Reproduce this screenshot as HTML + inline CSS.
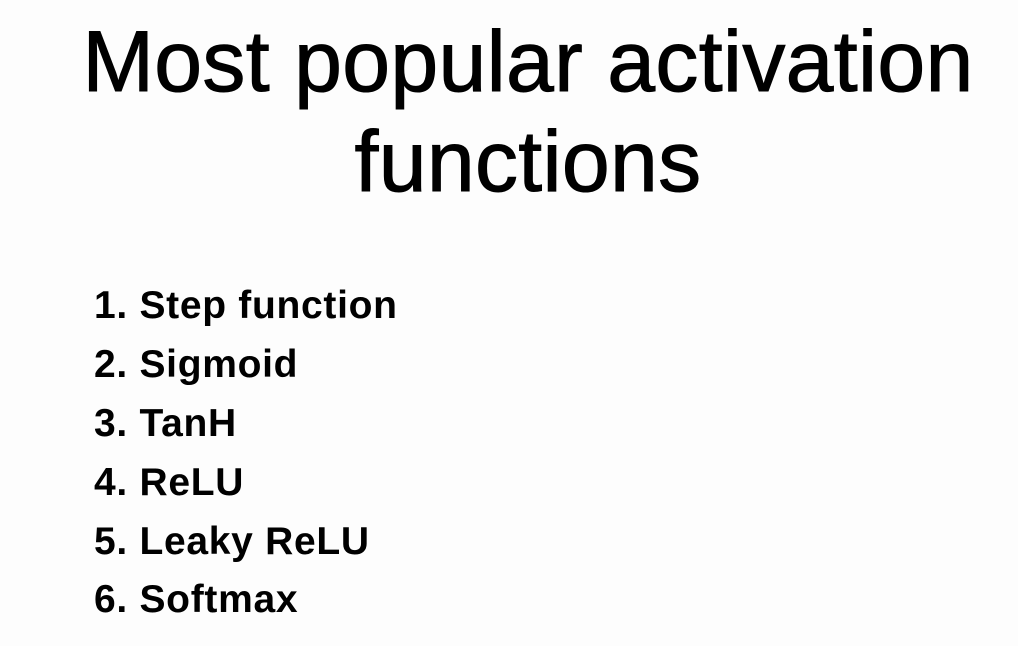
<!DOCTYPE html>
<html><head><style>
html,body{margin:0;padding:0;width:1018px;height:646px;background:#fdfdfd;overflow:hidden}
body{position:relative;font-family:"Liberation Sans",Arial,sans-serif;color:#000}
.t{position:absolute;left:0;width:1056px;text-align:center;font-size:86px;line-height:100px;white-space:nowrap;-webkit-text-stroke:1px #000;letter-spacing:0.3px}
.l{position:absolute;left:94px;font-size:39px;font-weight:bold;white-space:nowrap;line-height:40px;letter-spacing:0.7px}
</style></head><body>
<div class="t" style="top:12px">Most popular activation</div>
<div class="t" style="top:112px">functions</div>
<div class="l" style="top:286px">1. Step function</div>
<div class="l" style="top:345px">2. Sigmoid</div>
<div class="l" style="top:404px">3. TanH</div>
<div class="l" style="top:463px">4. ReLU</div>
<div class="l" style="top:522px">5. Leaky ReLU</div>
<div class="l" style="top:580px">6. Softmax</div>
</body></html>
